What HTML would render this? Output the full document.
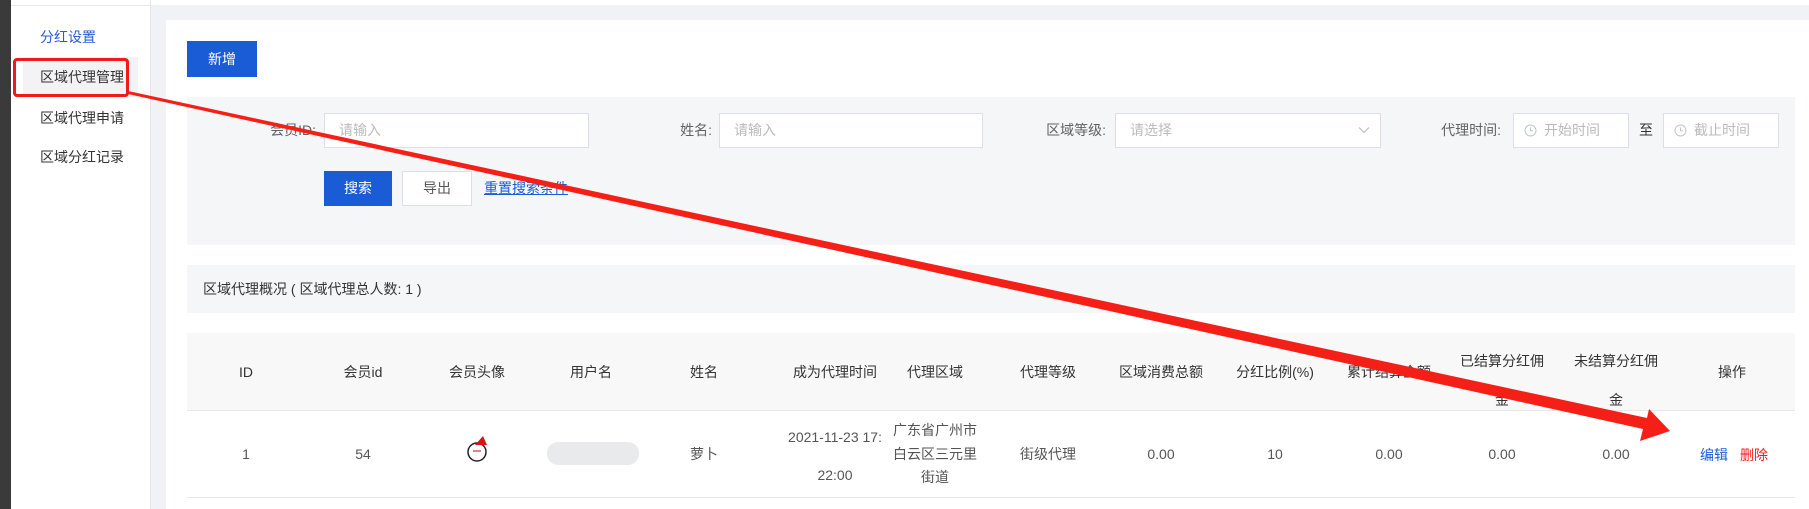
<!DOCTYPE html>
<html><head><meta charset="utf-8"><style>
*{margin:0;padding:0;box-sizing:border-box}
body{width:1809px;height:509px;overflow:hidden;background:#f0f2f5;font-family:"Liberation Sans","Noto Sans CJK SC",sans-serif;font-size:14px;color:#333;position:relative}
.a{position:absolute;white-space:nowrap}
.c{position:absolute;transform:translateX(-50%);text-align:center;white-space:nowrap;line-height:20px}
.inp{position:absolute;background:#fff;border:1px solid #dcdfe6;color:#bbb;font-size:14px;line-height:33px;padding-left:14px}
.lbl{position:absolute;color:#606266;line-height:35px;text-align:right}
</style></head><body>
<div class="a" style="left:0;top:0;width:11px;height:509px;background:#3a3a3a"></div>
<div class="a" style="left:11px;top:0;width:140px;height:509px;background:#fff;border-right:1px solid #e6e6e6"></div>
<div class="a" style="left:11px;top:5px;width:140px;height:1px;background:#e8e8e8"></div>
<div class="a" style="left:151px;top:0;width:1658px;height:5px;background:#fff"></div>
<div class="a" style="left:23px;top:57px;width:115px;height:40px;background:#f3f3f5"></div>
<div class="a" style="left:40px;top:27px;color:#2a5bd7;line-height:20px">分红设置</div>
<div class="a" style="left:40px;top:67px;line-height:20px">区域代理管理</div>
<div class="a" style="left:40px;top:108px;line-height:20px">区域代理申请</div>
<div class="a" style="left:40px;top:147px;line-height:20px">区域分红记录</div>

<div class="a" style="left:166px;top:20px;width:1643px;height:489px;background:#fff"></div>
<div class="a" style="left:187px;top:41px;width:70px;height:36px;background:#1a5cd6;color:#fff;text-align:center;line-height:36px">新增</div>

<div class="a" style="left:187px;top:97px;width:1608px;height:148px;background:#f5f6f8"></div>
<div class="lbl" style="left:220px;width:96px;top:113px">会员ID:</div>
<div class="inp" style="left:324px;top:113px;width:265px;height:35px">请输入</div>
<div class="lbl" style="left:640px;width:72px;top:113px">姓名:</div>
<div class="inp" style="left:719px;top:113px;width:264px;height:35px">请输入</div>
<div class="lbl" style="left:1010px;width:96px;top:113px">区域等级:</div>
<div class="inp" style="left:1115px;top:113px;width:266px;height:35px">请选择
<svg style="position:absolute;right:10px;top:12px" width="12" height="8" viewBox="0 0 12 8"><path d="M1 1.5L6 6.5L11 1.5" fill="none" stroke="#c0c4cc" stroke-width="1.3"/></svg></div>
<div class="lbl" style="left:1405px;width:96px;top:113px">代理时间:</div>
<div class="inp" style="left:1513px;top:113px;width:116px;height:35px;padding-left:30px">开始时间
<svg style="position:absolute;left:10px;top:10px" width="13" height="13" viewBox="0 0 13 13"><circle cx="6.5" cy="6.5" r="5.5" fill="none" stroke="#c0c4cc"/><path d="M6.5 3.5V6.8H9" fill="none" stroke="#c0c4cc"/></svg></div>
<div class="lbl" style="left:1639px;top:113px;color:#333">至</div>
<div class="inp" style="left:1663px;top:113px;width:116px;height:35px;padding-left:30px">截止时间
<svg style="position:absolute;left:10px;top:10px" width="13" height="13" viewBox="0 0 13 13"><circle cx="6.5" cy="6.5" r="5.5" fill="none" stroke="#c0c4cc"/><path d="M6.5 3.5V6.8H9" fill="none" stroke="#c0c4cc"/></svg></div>
<div class="a" style="left:324px;top:171px;width:68px;height:35px;background:#1a5cd6;color:#fff;text-align:center;line-height:35px">搜索</div>
<div class="a" style="left:402px;top:171px;width:70px;height:35px;background:#fff;border:1px solid #dcdfe6;color:#555;text-align:center;line-height:33px">导出</div>
<div class="a" style="left:484px;top:178px;color:#1a5cd6;text-decoration:underline;line-height:20px">重置搜索条件</div>

<div class="a" style="left:187px;top:265px;width:1608px;height:48px;background:#f5f6f8"></div>
<div class="a" style="left:203px;top:279px;line-height:20px">区域代理概况 ( 区域代理总人数: 1 )</div>

<div class="a" style="left:187px;top:333px;width:1608px;height:78px;background:#f8f8f9;border-bottom:1px solid #e8e8e8"></div>
<div class="a" style="left:187px;top:497px;width:1608px;height:1px;background:#e8e8e8"></div>

<div class="c" style="left:246px;top:362px">ID</div>
<div class="c" style="left:363px;top:362px">会员id</div>
<div class="c" style="left:477px;top:362px">会员头像</div>
<div class="c" style="left:591px;top:362px">用户名</div>
<div class="c" style="left:704px;top:362px">姓名</div>
<div class="c" style="left:835px;top:362px">成为代理时间</div>
<div class="c" style="left:935px;top:362px">代理区域</div>
<div class="c" style="left:1048px;top:362px">代理等级</div>
<div class="c" style="left:1161px;top:362px">区域消费总额</div>
<div class="c" style="left:1275px;top:362px">分红比例(%)</div>
<div class="c" style="left:1389px;top:362px">累计结算金额</div>
<div class="c" style="left:1502px;top:342px;line-height:39px">已结算分红佣<br>金</div>
<div class="c" style="left:1616px;top:342px;line-height:39px">未结算分红佣<br>金</div>
<div class="c" style="left:1732px;top:362px">操作</div>

<div class="c" style="left:246px;top:444px;color:#555">1</div>
<div class="c" style="left:363px;top:444px;color:#555">54</div>
<svg class="a" style="left:464px;top:430px" width="28" height="34" viewBox="0 0 28 34"><circle cx="13" cy="22" r="9" fill="#fff" stroke="#222" stroke-width="1.5"/><path d="M11 15L19 6L23 15Z" fill="#d8141b"/><path d="M9 21h8" stroke="#c33" stroke-width="1.2"/></svg>
<div class="a" style="left:547px;top:442px;width:92px;height:23px;border-radius:11px;background:#e9eaec"></div>
<div class="c" style="left:704px;top:444px;color:#555">萝卜</div>
<div class="c" style="left:835px;top:418px;line-height:38px;color:#555">2021-11-23 17:<br>22:00</div>
<div class="c" style="left:935px;top:419px;line-height:23.5px;color:#555">广东省广州市<br>白云区三元里<br>街道</div>
<div class="c" style="left:1048px;top:444px;color:#555">街级代理</div>
<div class="c" style="left:1161px;top:444px;color:#555">0.00</div>
<div class="c" style="left:1275px;top:444px;color:#555">10</div>
<div class="c" style="left:1389px;top:444px;color:#555">0.00</div>
<div class="c" style="left:1502px;top:444px;color:#555">0.00</div>
<div class="c" style="left:1616px;top:444px;color:#555">0.00</div>
<div class="a" style="left:1700px;top:445px;color:#1a5cd6;line-height:20px">编辑</div>
<div class="a" style="left:1740px;top:445px;color:#f01c1c;line-height:20px">删除</div>

<div class="a" style="left:13px;top:58px;width:116px;height:39px;border:3px solid #f0191c;border-radius:4px"></div>
<svg class="a" style="left:0;top:0" width="1809" height="509" viewBox="0 0 1809 509"><polygon points="128,91 1647,418 1649,409 1670,431 1640,441 1643,429 128,94" fill="#f42017"/></svg>
</body></html>
